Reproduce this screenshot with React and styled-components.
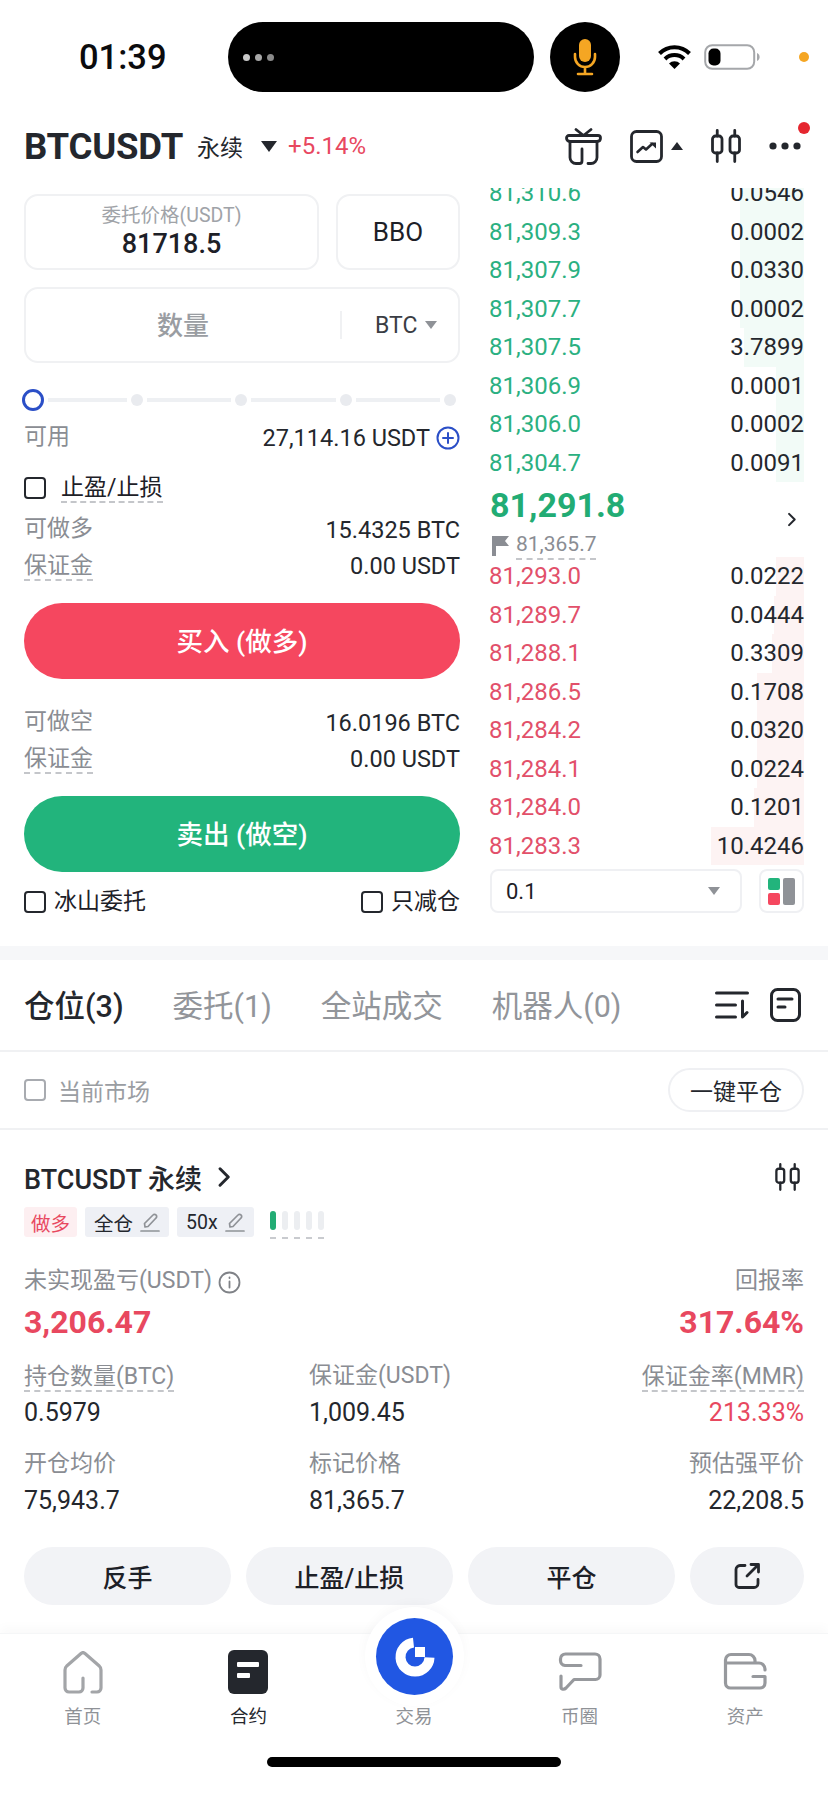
import React from 'react';
import styled, { createGlobalStyle } from 'styled-components';

const GlobalStyle = createGlobalStyle`
  html, body { margin: 0; padding: 0; background: #fff; }
  * { box-sizing: border-box; }
  body { font-family: Roboto, "Noto Sans CJK SC", sans-serif; color: #1d2027; }
`;

const asks = [
  ['81,310.6', '0.0546', 64], ['81,309.3', '0.0002', 64], ['81,307.9', '0.0330', 64], ['81,307.7', '0.0002', 64],
  ['81,307.5', '3.7899', 60], ['81,306.9', '0.0001', 28], ['81,306.0', '0.0002', 28], ['81,304.7', '0.0091', 28],
];
const bids = [
  ['81,293.0', '0.0222', 28], ['81,289.7', '0.0444', 30], ['81,288.1', '0.3309', 32], ['81,286.5', '0.1708', 47],
  ['81,284.2', '0.0320', 47], ['81,284.1', '0.0224', 47], ['81,284.0', '0.1201', 50], ['81,283.3', '10.4246', 93],
];

const Page = styled.div`
  width: 828px;
  height: 1795px;
  overflow: hidden;
  display: flex;
  flex-direction: column;
`;

const StatusBar = styled.div`
  height: 110px;
  padding: 22px 0 18px 79px;
  display: flex;
  align-items: center;
`;
const Time = styled.div`
  width: 149px;
  font-size: 34.5px;
  font-weight: 500;
  color: #0b0b0d;
`;
const Island = styled.div`
  width: 306px;
  height: 70px;
  border-radius: 35px;
  background: #000;
  display: flex;
  align-items: center;
  gap: 5px;
  padding-left: 15px;
`;
const IslandDot = styled.span`
  width: 7px;
  height: 7px;
  border-radius: 50%;
  background: ${p => p.$c};
`;
const MicCircle = styled.div`
  width: 70px;
  height: 70px;
  margin-left: 16px;
  border-radius: 50%;
  background: #000;
  display: flex;
  align-items: center;
  justify-content: center;
`;
const StatusIcons = styled.div`
  margin-left: 37px;
  display: flex;
  align-items: center;
  gap: 12px;
`;
const OrangeDot = styled.span`
  width: 10px;
  height: 10px;
  margin-left: 39px;
  border-radius: 50%;
  background: #f5a623;
`;

const Header = styled.div`
  height: 78px;
  padding: 0 24px 6px;
  display: flex;
  align-items: center;
`;
const Symbol = styled.div`
  font-size: 36.5px;
  font-weight: 700;
  color: #24272d;
  letter-spacing: -0.2px;
`;
const Perp = styled.div`
  margin-left: 14px;
  font-size: 23px;
  color: #24272d;
`;
const DownTri = styled.span`
  width: 0;
  height: 0;
  margin-left: 18px;
  border-left: 8px solid transparent;
  border-right: 8px solid transparent;
  border-top: 11px solid #24272d;
`;
const Change = styled.div`
  margin-left: 11px;
  font-size: 24px;
  color: #e8485f;
`;
const HeaderIcons = styled.div`
  margin-left: auto;
  margin-right: 3px;
  display: flex;
  align-items: center;
  gap: 28px;
  position: relative;
`;
const ChartGroup = styled.div`
  display: flex;
  align-items: center;
  gap: 8px;
`;
const Notify = styled.span`
  position: absolute;
  right: -9px;
  top: -6px;
  width: 12px;
  height: 12px;
  border-radius: 50%;
  background: #e5262f;
`;
const UpTri = styled.span`
  width: 0;
  height: 0;
  border-left: 6px solid transparent;
  border-right: 6px solid transparent;
  border-bottom: 8px solid #24272d;
`;

const Trade = styled.div`
  height: 758px;
  padding: 0 24px;
  display: grid;
  grid-template-columns: 436px 314px;
  column-gap: 30px;
`;
const LeftCol = styled.div`
  padding-top: 6px;
  display: flex;
  flex-direction: column;
`;
const PriceRow = styled.div`
  display: flex;
  gap: 17px;
`;
const Field = styled.div`
  height: 76px;
  border: 2px solid #f0f1f3;
  border-radius: 14px;
  display: flex;
  align-items: center;
  justify-content: center;
  flex: ${p => p.$flex || 'none'};
  width: ${p => p.$w || 'auto'};
  margin-top: ${p => p.$mt || 0}px;
`;
const PriceInner = styled.div`
  text-align: center;
`;
const PriceLabel = styled.div`
  font-size: 19.5px;
  line-height: 24px;
  color: #a0a3a8;
`;
const PriceValue = styled.div`
  font-size: 27px;
  line-height: 32px;
  font-weight: 500;
`;
const BboText = styled.div`
  font-size: 26px;
`;
const QtyHolder = styled.div`
  flex: 1;
  padding-bottom: 4px;
  text-align: center;
  font-size: 26px;
  font-weight: 500;
  color: #9a9da2;
`;
const QtyDivider = styled.div`
  width: 2px;
  height: 28px;
  background: #f0f1f3;
`;
const Unit = styled.div`
  width: 116px;
  padding-left: 33px;
  display: flex;
  align-items: center;
  gap: 8px;
  font-size: 23px;
  color: #3a3d44;
`;
const SmallTri = styled.span`
  width: 0;
  height: 0;
  border-left: 6px solid transparent;
  border-right: 6px solid transparent;
  border-top: 8px solid ${p => p.$c || '#8f9297'};
`;

const Slider = styled.div`
  height: 24px;
  margin: 25px 4px 0 -2px;
  display: flex;
  align-items: center;
  gap: 4px;
`;
const Thumb = styled.span`
  width: 22px;
  height: 22px;
  border-radius: 50%;
  border: 3px solid #2b4fc7;
  background: #fff;
`;
const SliderLine = styled.span`
  flex: ${p => (p.$first ? '0 0 79px' : 1)};
  height: 4px;
  background: #eef0f3;
`;
const SliderDot = styled.span`
  width: 12px;
  height: 12px;
  border-radius: 50%;
  background: #e9ebef;
`;

const InfoRow = styled.div`
  height: 36px;
  margin-top: ${p => p.$mt || 0}px;
  display: flex;
  align-items: center;
  justify-content: space-between;
  font-size: 23.5px;
`;
const Muted = styled.span`
  color: #8a8d93;
  font-size: 23px;
  line-height: 27px;
  padding-bottom: 3px;
  ${p => p.$dash && 'padding-bottom: 0; border-bottom: 2px dashed #c4c6ca;'}
`;
const Value = styled.span`
  display: flex;
  align-items: center;
  gap: 6px;
  color: #24272d;
`;
const CheckLine = styled.div`
  height: 36px;
  margin-top: 14px;
  display: flex;
  align-items: center;
  gap: 15px;
  font-size: 23px;
`;
const Box = styled.span`
  width: 22px;
  height: 22px;
  border: 2px solid ${p => p.$c || '#24272d'};
  border-radius: 4px;
  flex: none;
`;
const Dashed = styled.span`
  border-bottom: 2px dashed #c4c6ca;
  line-height: 27px;
`;
const BigButton = styled.div`
  height: 76px;
  margin-top: 19px;
  border-radius: 38px;
  background: ${p => p.$c};
  color: #fff;
  display: flex;
  align-items: center;
  justify-content: center;
  font-size: 26.5px;
  font-weight: 500;
  padding-bottom: 3px;
`;
const BottomChecks = styled.div`
  height: 36px;
  margin-top: 12px;
  display: flex;
  justify-content: space-between;
  font-size: 23px;
`;
const CheckItem = styled.div`
  display: flex;
  align-items: center;
  gap: 8px;
  line-height: 30px;
`;

const Book = styled.div`
  display: flex;
  flex-direction: column;
`;
const AskList = styled.div`
  height: 294px;
  overflow: hidden;
  display: flex;
  flex-direction: column;
  justify-content: flex-end;
`;
const BookRow = styled.div`
  position: relative;
  flex: none;
  height: 38.5px;
  display: flex;
  align-items: center;
  justify-content: space-between;
  font-size: 24px;
`;
const Depth = styled.span`
  position: absolute;
  right: 0;
  top: 0;
  bottom: 0;
  background: ${p => p.$c};
`;
const BookPrice = styled.span`
  position: relative;
  margin-left: -1px;
  color: ${p => p.$c};
`;
const BookQty = styled.span`
  position: relative;
  color: #24272d;
`;
const Mid = styled.div`
  height: 75px;
  position: relative;
`;
const MidPrice = styled.div`
  height: 46px;
  line-height: 46px;
  font-size: 34px;
  font-weight: 700;
  color: #22ac74;
`;
const Mark = styled.div`
  margin-top: 3px;
  display: flex;
  align-items: center;
  gap: 7px;
  padding-left: 2px;
  font-size: 21px;
  color: #8a8d93;
`;
const MidArrow = styled.span`
  position: absolute;
  right: 7px;
  top: 30px;
  display: flex;
`;
const BookTools = styled.div`
  margin-top: 4px;
  display: flex;
  justify-content: space-between;
`;
const Select = styled.div`
  width: 252px;
  height: 44px;
  padding: 0 20px 0 14px;
  border: 2px solid #eff0f3;
  border-radius: 8px;
  display: flex;
  align-items: center;
  justify-content: space-between;
  font-size: 22px;
`;
const LayoutBtn = styled.div`
  width: 45px;
  height: 44px;
  border: 2px solid #eff0f3;
  border-radius: 8px;
  display: flex;
  align-items: center;
  justify-content: center;
`;

const Band = styled.div`
  height: 14px;
  background: #f6f7f9;
`;
const Tabs = styled.div`
  height: 92px;
  padding: 0 27px 0 24px;
  border-bottom: 2px solid #f0f1f3;
  display: flex;
  align-items: center;
  gap: 49px;
`;
const TabItem = styled.div`
  font-size: 30.5px;
  padding-bottom: 3px;
  font-weight: ${p => (p.$active ? 500 : 400)};
  color: ${p => (p.$active ? '#24272d' : '#92959a')};
`;
const TabTools = styled.div`
  margin-left: auto;
  display: flex;
  align-items: center;
  gap: 21px;
`;
const FilterBar = styled.div`
  height: 78px;
  padding: 0 24px;
  border-bottom: 2px solid #f0f1f3;
  display: flex;
  align-items: center;
  gap: 12px;
  font-size: 23px;
  color: #9a9da2;
`;
const ClosePill = styled.div`
  margin-left: auto;
  width: 136px;
  height: 44px;
  border: 2px solid #eff0f3;
  border-radius: 22px;
  display: flex;
  align-items: center;
  justify-content: center;
  font-size: 23px;
  color: #24272d;
`;

const Card = styled.div`
  padding: 27px 24px 0;
`;
const TitleRow = styled.div`
  height: 40px;
  display: flex;
  align-items: center;
  gap: 15px;
  font-size: 27px;
  font-weight: 500;
  color: #24272d;
`;
const TitleEnd = styled.span`
  margin: 0 4px 0 auto;
  display: flex;
`;
const Tags = styled.div`
  height: 30px;
  margin-top: 10px;
  display: flex;
  gap: 8px;
`;
const Tag = styled.div`
  height: 30px;
  padding: 0 ${p => (p.$red ? 7 : 9)}px;
  border-radius: 3px;
  display: flex;
  align-items: center;
  gap: 7px;
  font-size: 19.5px;
  background: ${p => (p.$red ? '#fdeff1' : '#eef0f5')};
  color: ${p => (p.$red ? '#e8485f' : '#24272d')};
`;
const Risk = styled.div`
  margin-left: 8px;
  padding-top: 4px;
  display: flex;
  gap: 6px;
`;
const RiskBar = styled.div`
  width: 6px;
  height: 28px;
  display: flex;
  flex-direction: column;
  justify-content: space-between;
  &::before {
    content: '';
    height: 19px;
    border-radius: 3px;
    background: ${p => (p.$on ? '#22ac74' : '#eceef1')};
  }
  &::after {
    content: '';
    height: 2px;
    background: #c9cbcf;
  }
`;
const PnlRow = styled.div`
  margin-top: 27px;
  display: flex;
  justify-content: space-between;
`;
const PnlCol = styled.div`
  display: flex;
  flex-direction: column;
  align-items: ${p => (p.$end ? 'flex-end' : 'flex-start')};
`;
const LabelLine = styled.div`
  height: 36px;
  display: flex;
  align-items: center;
  gap: 6px;
`;
const PnlValue = styled.div`
  height: 44px;
  line-height: 44px;
  font-size: 32px;
  font-weight: 700;
  color: #e8485f;
`;
const Stats = styled.div`
  margin-top: 15px;
  display: grid;
  grid-template-columns: 285px 1fr 1fr;
  row-gap: 16px;
`;
const Stat = styled.div`
  display: flex;
  flex-direction: column;
  align-items: ${p => (p.$end ? 'flex-end' : 'flex-start')};
`;
const StatValue = styled.div`
  height: 36px;
  line-height: 36px;
  font-size: 25px;
  color: ${p => p.$c || '#24272d'};
`;
const Actions = styled.div`
  margin-top: 28px;
  display: grid;
  grid-template-columns: 207px 207px 207px 1fr;
  column-gap: 15px;
`;
const ActionBtn = styled.div`
  height: 58px;
  border-radius: 29px;
  background: #f2f3f6;
  display: flex;
  align-items: center;
  justify-content: center;
  font-size: 25px;
  font-weight: 500;
  color: #1d2027;
`;

const TabBar = styled.div`
  position: relative;
  margin-top: 28px;
  flex: 1;
  border-top: 1px solid #f5f6f7;
  box-shadow: 0 -6px 10px rgba(20, 30, 50, 0.025);
  background: #fff;
  display: flex;
  flex-direction: column;
  align-items: center;
`;
const TabGrid = styled.div`
  width: 100%;
  padding-top: 16px;
  display: grid;
  grid-template-columns: repeat(5, 1fr);
`;
const NavItem = styled.div`
  display: flex;
  flex-direction: column;
  align-items: center;
  font-size: 18.5px;
  color: ${p => (p.$active ? '#24272d' : '#8f9297')};
`;
const NavIcon = styled.div`
  height: 44px;
  display: flex;
  align-items: center;
`;
const NavLabel = styled.div`
  margin-top: 10px;
  line-height: 26px;
`;
const TradeBtn = styled.div`
  position: absolute;
  left: 376px;
  top: -16px;
  width: 77px;
  height: 77px;
  border-radius: 50%;
  background: #2157e3;
  box-shadow: 0 0 0 11px #fff, 0 -3px 12px 11px rgba(20, 30, 50, 0.03);
  display: flex;
  align-items: center;
  justify-content: center;
`;
const HomeBar = styled.div`
  width: 294px;
  height: 10px;
  margin-top: 27px;
  border-radius: 5px;
  background: #000;
`;

const ink = { fill: 'none', stroke: '#24272d', strokeWidth: 2.8, strokeLinecap: 'round', strokeLinejoin: 'round' };
const navInk = { fill: 'none', stroke: '#97999d', strokeWidth: 3.2, strokeLinecap: 'round', strokeLinejoin: 'round' };

const Mic = () => (
  <svg width="24" height="38" viewBox="0 0 24 38" fill="none" stroke="#f5a623" strokeWidth="2.6" strokeLinecap="round">
    <rect x="6" y="1" width="12" height="23" rx="6" fill="#f5a623" stroke="none" />
    <path d="M2 16v3a10 10 0 0 0 20 0v-3M12 29v7M5 36h14" />
  </svg>
);
const Wifi = () => (
  <svg width="35" height="26" viewBox="0 0 35 26" fill="none" stroke="#000" strokeWidth="4" strokeLinecap="butt">
    <path d="M2.5 9.5a21 21 0 0 1 30 0" />
    <path d="M8 15a13.5 13.5 0 0 1 19 0" />
    <path d="M17.5 25l-5.5-5.5a7.6 7.6 0 0 1 11 0z" fill="#000" stroke="none" />
  </svg>
);
const Battery = () => (
  <svg width="56" height="26" viewBox="0 0 56 26">
    <rect x="1.2" y="1.2" width="49" height="23.6" rx="7" fill="#fff" stroke="#a5a7aa" strokeWidth="2" />
    <rect x="4.5" y="4.5" width="12" height="17" rx="5" fill="#000" />
    <path d="M53 9c2 1 2.6 2.5 2.6 4s-.6 3-2.6 4z" fill="#a5a7aa" />
  </svg>
);
const Gift = () => (
  <svg width="37" height="37" viewBox="0 0 37 37" {...ink}>
    <path d="M11 1.500l7.500 6 7.500-6" />
    <path d="M4 7.500h29a2.500 2.500 0 0 1 2.500 2.500c0 1.800-1 3.500-3.500 3.500H5C2.500 13.500 1.500 11.800 1.500 10A2.500 2.500 0 0 1 4 7.500z" />
    <path d="M5 14v15.500a6 6 0 0 0 6 6h3.500a2.500 2.500 0 0 0 2.500-2.500V21" />
    <path d="M32 14v15.500a6 6 0 0 1-6 6h-3" />
  </svg>
);
const ChartBox = () => (
  <svg width="33" height="33" viewBox="0 0 33 33" fill="none">
    <rect x="1.500" y="1.500" width="30" height="30" rx="5" stroke="#24272d" strokeWidth="2.8" />
    <path d="M7.500 22l5.500-5 3 2.500 6-5.500" stroke="#24272d" strokeWidth="2.600" strokeLinecap="round" strokeLinejoin="round" />
    <path d="M19.500 12.500h6.500v6z" fill="#24272d" />
  </svg>
);
const Candles = ({ w = 30, h = 34 }) => (
  <svg width={w} height={h} viewBox="0 0 30 34" {...ink}>
    <rect x="1.500" y="7" width="9.500" height="17" rx="3" />
    <rect x="19" y="7" width="9.500" height="17" rx="3" />
    <path d="M6.250 1.500V7M6.250 24v8.500M23.750 1.500V7M23.750 24v8.500" />
  </svg>
);
const Dots = () => (
  <svg width="32" height="8" viewBox="0 0 32 8" fill="#24272d">
    <circle cx="4" cy="4" r="3.6" /><circle cx="16" cy="4" r="3.6" /><circle cx="28" cy="4" r="3.6" />
  </svg>
);
const PlusCircle = () => (
  <svg width="24" height="24" viewBox="0 0 24 24" fill="none" stroke="#2b4fc7" strokeWidth="2" strokeLinecap="round">
    <circle cx="12" cy="12" r="10.5" /><path d="M12 7v10M7 12h10" />
  </svg>
);
const Flag = () => (
  <svg width="17" height="20" viewBox="0 0 17 20" fill="#8a8d93">
    <path d="M0 0h17l-4 5 4 5H4v10H0z" />
  </svg>
);
const Chevron = ({ s = 16, c = '#24272d' }) => (
  <svg width={s * 0.65} height={s} viewBox="0 0 10 16" fill="none" stroke={c} strokeWidth="2.2" strokeLinecap="round" strokeLinejoin="round">
    <path d="M2 2l6 6-6 6" />
  </svg>
);
const LayoutIcon = () => (
  <svg width="27" height="27" viewBox="0 0 27 27">
    <rect x="0" y="0" width="12" height="12" rx="2" fill="#22b47c" />
    <rect x="0" y="15" width="12" height="12" rx="2" fill="#f5475f" />
    <rect x="15" y="0" width="12" height="27" rx="2" fill="#8f9297" />
  </svg>
);
const SortIcon = () => (
  <svg width="34" height="28" viewBox="0 0 34 28" {...ink} strokeWidth="3">
    <path d="M1.500 2h31M1.500 14h19M1.500 26h19M27.500 10v16l4.500-4.500" />
  </svg>
);
const NoteIcon = () => (
  <svg width="31" height="34" viewBox="0 0 31 34" {...ink} strokeWidth="3">
    <rect x="1.500" y="1.500" width="28" height="31" rx="6" />
    <path d="M8 11h14M8 19h7" />
  </svg>
);
const Pencil = () => (
  <svg width="20" height="20" viewBox="0 0 20 20" fill="none" stroke="#8f9297" strokeWidth="1.7" strokeLinecap="round" strokeLinejoin="round">
    <path d="M1 19h18M5 15l-.5-3.500L13 3a2 2 0 0 1 3 0 2 2 0 0 1 0 3l-8 8.500z" />
  </svg>
);
const Info = () => (
  <svg width="23" height="23" viewBox="0 0 23 23" fill="none" stroke="#7f8287" strokeWidth="1.8" strokeLinecap="round">
    <circle cx="11.500" cy="11.500" r="10" /><path d="M11.500 10.500v6M11.500 6.500v.6" />
  </svg>
);
const Share = () => (
  <svg width="26" height="26" viewBox="0 0 26 26" {...ink}>
    <path d="M11 2.500H6a4 4 0 0 0-4 4v15a3 3 0 0 0 3 3h15a4 4 0 0 0 4-4v-4M13 13L24 2M17 1.500h7.500V9" />
  </svg>
);
const HomeIcon = () => (
  <svg width="40" height="43" viewBox="0 0 40 43" {...navInk} stroke="#a3a5a8">
    <path d="M29 41h5a4 4 0 0 0 4-4V19c0-2-.6-3-2-4.300L22 2.500a3 3 0 0 0-4 0L4 14.700C2.600 16 2 17 2 19v18a4 4 0 0 0 4 4h10a4 4 0 0 0 4-4V27" />
  </svg>
);
const ContractIcon = () => (
  <svg width="40" height="44" viewBox="0 0 40 44">
    <rect width="40" height="44" rx="6" fill="#24272d" />
    <rect x="9" y="12" width="22" height="5" rx="1" fill="#fff" />
    <rect x="9" y="23" width="13" height="5" rx="1" fill="#fff" />
  </svg>
);
const ChatIcon = () => (
  <svg width="44" height="40" viewBox="0 0 44 40" {...navInk}>
    <path d="M23 13.500H7a5 5 0 0 1-4.500-5V7A5 5 0 0 1 7.500 2H37a5 5 0 0 1 5 5v16a4.500 4.500 0 0 1-4.500 4.500H16L8 36c-2 2-5 1.500-5-1V24" />
  </svg>
);
const WalletIcon = () => (
  <svg width="45" height="40" viewBox="0 0 45 40" {...navInk}>
    <path d="M2.500 11H36a6 6 0 0 1 6 6v1M2.500 8A5.500 5.500 0 0 1 8 2.500h18a6 6 0 0 1 6 6V11M2.500 8v23a5 5 0 0 0 5 5H37a5 5 0 0 0 5-5v-6.500H30" />
  </svg>
);
const LogoIcon = () => (
  <svg width="40" height="40" viewBox="0 0 40 40" fill="none">
    <path d="M18.500 5.600A14.500 14.500 0 1 0 34.500 20.500" stroke="#fff" strokeWidth="10" />
    <rect x="20" y="10" width="10" height="10" fill="#fff" />
  </svg>
);

const Row = ({ price, qty, depth, color, bg }) => (
  <BookRow>
    <Depth $c={bg} style={{ width: depth }} />
    <BookPrice $c={color}>{price}</BookPrice>
    <BookQty>{qty}</BookQty>
  </BookRow>
);

export default function App() {
  return (
    <Page>
      <GlobalStyle />
      <StatusBar>
        <Time>01:39</Time>
        <Island>
          <IslandDot $c="#c9c9c9" /><IslandDot $c="#a8a8a8" /><IslandDot $c="#8a8a8a" />
        </Island>
        <MicCircle><Mic /></MicCircle>
        <StatusIcons>
          <Wifi />
          <Battery />
        </StatusIcons>
        <OrangeDot />
      </StatusBar>

      <Header>
        <Symbol>BTCUSDT</Symbol>
        <Perp>永续</Perp>
        <DownTri />
        <Change>+5.14%</Change>
        <HeaderIcons>
          <Gift />
          <ChartGroup>
            <ChartBox />
            <UpTri />
          </ChartGroup>
          <Candles />
          <Dots />
          <Notify />
        </HeaderIcons>
      </Header>

      <Trade>
        <LeftCol>
          <PriceRow>
            <Field $w="295px">
              <PriceInner>
                <PriceLabel>委托价格(USDT)</PriceLabel>
                <PriceValue>81718.5</PriceValue>
              </PriceInner>
            </Field>
            <Field $flex="1"><BboText>BBO</BboText></Field>
          </PriceRow>
          <Field $mt={17}>
            <QtyHolder>数量</QtyHolder>
            <QtyDivider />
            <Unit>BTC <SmallTri /></Unit>
          </Field>
          <Slider>
            <Thumb />
            <SliderLine $first /><SliderDot />
            <SliderLine /><SliderDot />
            <SliderLine /><SliderDot />
            <SliderLine /><SliderDot />
          </Slider>
          <InfoRow $mt={8}>
            <Muted>可用</Muted>
            <Value>27,114.16 USDT <PlusCircle /></Value>
          </InfoRow>
          <CheckLine>
            <Box />
            <Dashed>止盈/止损</Dashed>
          </CheckLine>
          <InfoRow $mt={6}>
            <Muted>可做多</Muted>
            <Value>15.4325 BTC</Value>
          </InfoRow>
          <InfoRow>
            <Muted $dash>保证金</Muted>
            <Value>0.00 USDT</Value>
          </InfoRow>
          <BigButton $c="#f5475f">买入 (做多)</BigButton>
          <InfoRow $mt={26}>
            <Muted>可做空</Muted>
            <Value>16.0196 BTC</Value>
          </InfoRow>
          <InfoRow>
            <Muted $dash>保证金</Muted>
            <Value>0.00 USDT</Value>
          </InfoRow>
          <BigButton $c="#22b47c">卖出 (做空)</BigButton>
          <BottomChecks>
            <CheckItem><Box />冰山委托</CheckItem>
            <CheckItem><Box />只减仓</CheckItem>
          </BottomChecks>
        </LeftCol>

        <Book>
          <AskList>
            {asks.map(([price, qty, depth]) => (
              <Row key={price} price={price} qty={qty} depth={depth} color="#2bb081" bg="#f2fbf7" />
            ))}
          </AskList>
          <Mid>
            <MidPrice>81,291.8</MidPrice>
            <Mark><Flag /><Dashed>81,365.7</Dashed></Mark>
            <MidArrow><Chevron s={15} /></MidArrow>
          </Mid>
          {bids.map(([price, qty, depth]) => (
            <Row key={price} price={price} qty={qty} depth={depth} color="#e2506a" bg="#fdf3f3" />
          ))}
          <BookTools>
            <Select>0.1 <SmallTri /></Select>
            <LayoutBtn><LayoutIcon /></LayoutBtn>
          </BookTools>
        </Book>
      </Trade>

      <Band />
      <Tabs>
        <TabItem $active>仓位(3)</TabItem>
        <TabItem>委托(1)</TabItem>
        <TabItem>全站成交</TabItem>
        <TabItem>机器人(0)</TabItem>
        <TabTools>
          <SortIcon />
          <NoteIcon />
        </TabTools>
      </Tabs>
      <FilterBar>
        <Box $c="#a8abb0" />
        当前市场
        <ClosePill>一键平仓</ClosePill>
      </FilterBar>

      <Card>
        <TitleRow>
          BTCUSDT 永续 <Chevron s={22} />
          <TitleEnd><Candles w={25} h={28} /></TitleEnd>
        </TitleRow>
        <Tags>
          <Tag $red>做多</Tag>
          <Tag>全仓 <Pencil /></Tag>
          <Tag>50x <Pencil /></Tag>
          <Risk>
            <RiskBar $on /><RiskBar /><RiskBar /><RiskBar /><RiskBar />
          </Risk>
        </Tags>
        <PnlRow>
          <PnlCol>
            <LabelLine><Muted>未实现盈亏(USDT)</Muted><Info /></LabelLine>
            <PnlValue>3,206.47</PnlValue>
          </PnlCol>
          <PnlCol $end>
            <LabelLine><Muted>回报率</Muted></LabelLine>
            <PnlValue>317.64%</PnlValue>
          </PnlCol>
        </PnlRow>
        <Stats>
          <Stat>
            <LabelLine><Muted $dash>持仓数量(BTC)</Muted></LabelLine>
            <StatValue>0.5979</StatValue>
          </Stat>
          <Stat>
            <LabelLine><Muted>保证金(USDT)</Muted></LabelLine>
            <StatValue>1,009.45</StatValue>
          </Stat>
          <Stat $end>
            <LabelLine><Muted $dash>保证金率(MMR)</Muted></LabelLine>
            <StatValue $c="#e8485f">213.33%</StatValue>
          </Stat>
          <Stat>
            <LabelLine><Muted>开仓均价</Muted></LabelLine>
            <StatValue>75,943.7</StatValue>
          </Stat>
          <Stat>
            <LabelLine><Muted>标记价格</Muted></LabelLine>
            <StatValue>81,365.7</StatValue>
          </Stat>
          <Stat $end>
            <LabelLine><Muted>预估强平价</Muted></LabelLine>
            <StatValue>22,208.5</StatValue>
          </Stat>
        </Stats>
        <Actions>
          <ActionBtn>反手</ActionBtn>
          <ActionBtn>止盈/止损</ActionBtn>
          <ActionBtn>平仓</ActionBtn>
          <ActionBtn><Share /></ActionBtn>
        </Actions>
      </Card>

      <TabBar>
        <TradeBtn><LogoIcon /></TradeBtn>
        <TabGrid>
          <NavItem><NavIcon><HomeIcon /></NavIcon><NavLabel>首页</NavLabel></NavItem>
          <NavItem $active><NavIcon><ContractIcon /></NavIcon><NavLabel>合约</NavLabel></NavItem>
          <NavItem><NavIcon /><NavLabel>交易</NavLabel></NavItem>
          <NavItem><NavIcon><ChatIcon /></NavIcon><NavLabel>币圈</NavLabel></NavItem>
          <NavItem><NavIcon><WalletIcon /></NavIcon><NavLabel>资产</NavLabel></NavItem>
        </TabGrid>
        <HomeBar />
      </TabBar>
    </Page>
  );
}
